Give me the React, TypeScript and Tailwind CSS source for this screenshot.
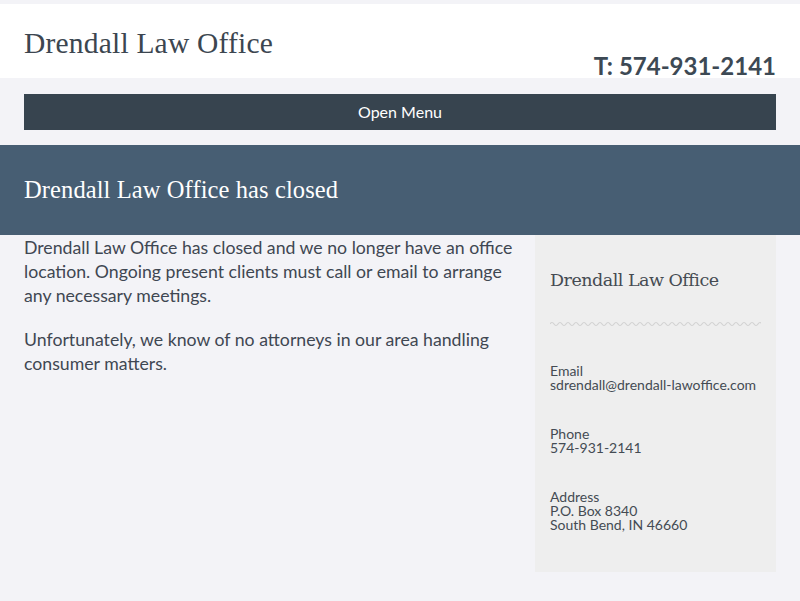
import React from 'react';

const WavyLine: React.FC = () => {
  // small repeating wave used as divider in the sidebar
  let d = 'M0 3';
  for (let x = 0; x < 211; x += 8) {
    d += ` q2 -3 4 0 q2 3 4 0`;
  }
  return (
    <svg width="211" height="6" viewBox="0 0 211 6" className="block">
      <path d={d} fill="none" stroke="#d2d2d2" strokeWidth="1.2" />
    </svg>
  );
};

const ContactItem: React.FC<{ label: string; lines: string[] }> = ({ label, lines }) => (
  <div className="text-[14px] leading-[14px] text-[#444b53]">
    <div>{label}</div>
    {lines.map((l) => (
      <div key={l}>{l}</div>
    ))}
  </div>
);

const App: React.FC = () => {
  return (
    <div className="min-h-screen bg-[#f3f3f7] font-['Lato',sans-serif] text-[#3e4650]">
      <div className="h-1" />
      <header className="bg-white h-[74px] px-6 flex justify-between">
        <h1 className="pt-[22px] text-[29.5px] leading-[34px] font-['Liberation_Serif',serif] text-[#3c4650] tracking-[0.2px]">
          Drendall Law Office
        </h1>
        <div className="self-end text-[24px] leading-[26px] font-bold text-[#3d4954] translate-y-[1px]">
          T: 574-931-2141
        </div>
      </header>

      <nav className="px-6 pt-4 pb-[15px]">
        <div className="h-9 bg-[#37444f] flex items-center justify-center text-white text-[16px]">
          Open Menu
        </div>
      </nav>

      <section className="bg-[#475e73] h-[90px] px-6 flex items-center">
        <h2 className="text-white text-[24.5px] font-['Liberation_Serif',serif] tracking-[0.1px]">
          Drendall Law Office has closed
        </h2>
      </section>

      <main className="px-6 flex gap-5 items-start">
        <div className="flex-1 pt-[1px] text-[17.7px] leading-6 text-[#3f4752]">
          <p>
            Drendall Law Office has closed and we no longer have an office location. Ongoing present
            clients must call or email to arrange any necessary meetings.
          </p>
          <p className="mt-5">
            Unfortunately, we know of no attorneys in our area handling consumer matters.
          </p>
        </div>

        <aside className="w-[241px] bg-[#eeeeee] px-[15px] pt-[33px] pb-[40px]">
          <h3 className="text-[17.5px] leading-6 font-['DejaVu_Serif',serif] text-[#454b52] tracking-[-0.5px]">
            Drendall Law Office
          </h3>
          <div className="mt-[29px]">
            <WavyLine />
          </div>
          <div className="mt-[37px] flex flex-col gap-[35px]">
            <ContactItem label="Email" lines={['sdrendall@drendall-lawoffice.com']} />
            <ContactItem label="Phone" lines={['574-931-2141']} />
            <ContactItem label="Address" lines={['P.O. Box 8340', 'South Bend, IN 46660']} />
          </div>
        </aside>
      </main>
    </div>
  );
};

export default App;
